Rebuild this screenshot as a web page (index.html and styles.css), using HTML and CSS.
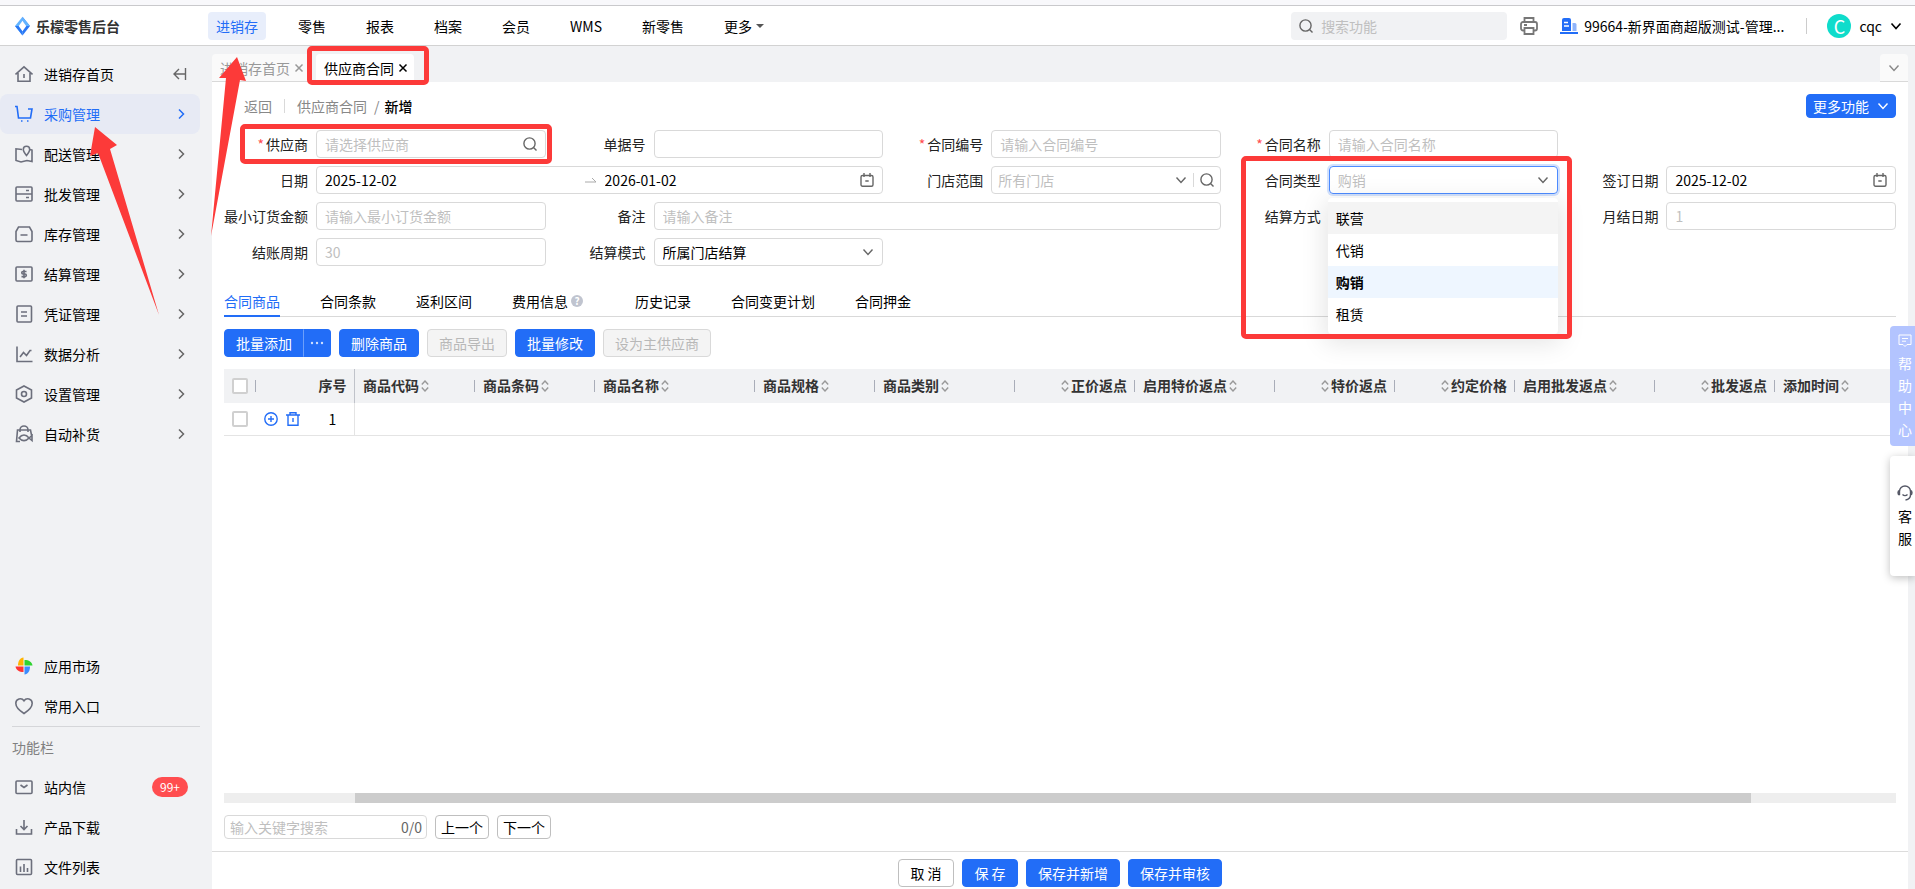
FILE: index.html
```html
<!DOCTYPE html>
<html lang="zh-CN">

<head>
    <meta charset="utf-8">
    <meta name="viewport" content="width=device-width, initial-scale=1.0">
    <title>供应商合同</title>
    <link rel="stylesheet" href="styles.css">
</head>

<body>
    <!-- shared icons -->
    <svg class="sprite" aria-hidden="true">
        <symbol id="down" viewBox="0 0 12 12"><path d="M1.5 3.5 6 8.5l4.5-5" /></symbol>
        <symbol id="right" viewBox="0 0 12 12"><path d="M4 1.5 8.5 6 4 10.5" /></symbol>
        <symbol id="search" viewBox="0 0 14 14"><circle cx="6.5" cy="6.5" r="5.6" /><path d="m10.5 10.5 3 3" /></symbol>
        <symbol id="calendar" viewBox="0 0 14 14"><rect x="1" y="2.5" width="12" height="10.8" rx="1.5" /><path d="M4 0v4M10 0v4M5.3 8h3.4" /></symbol>
        <symbol id="close" viewBox="0 0 10 10"><path d="m1.5 1.5 7 7M8.5 1.5l-7 7" /></symbol>
        <symbol id="sort" viewBox="0 0 8 12"><path d="M.8 4.500 4 1l3.200 3.500M.8 7.500 4 11l3.200-3.500" /></symbol>
    </svg>

    <header class="topbar">
        <div class="brand">
            <svg class="logo" viewBox="0 0 16 20"><path fill="#62b4ff" d="M8 0 0 10l8 10z" /><path fill="#2a78f5" d="m8 0 8 10-8 10z" /><path fill="#2a78f5" d="m0 10 8 10v-4.500L4 10z" /><path fill="#62b4ff" d="m8 0 8 10h-4L8 4.500z" /><path fill="#fff" d="m8 4.500 4 5.500-4 5.500L4 10z" /></svg>
            <span>乐檬零售后台</span>
        </div>
        <nav class="topnav">
            <a href="#" class="valgt">进销存</a>
            <a href="#">零售</a>
            <a href="#">报表</a>
            <a href="#">档案</a>
            <a href="#">会员</a>
            <a href="#">WMS</a>
            <a href="#">新零售</a>
            <a href="#">更多<i class="caret"></i></a>
        </nav>
        <div class="topright">
            <label class="topsearch">
                <svg class="icon14"><use href="#search" /></svg>
                <input type="text" placeholder="搜索功能" aria-label="搜索功能">
            </label>
            <svg class="printer" viewBox="0 0 18 18"><path d="M4.500 5V1h9v4M4.500 13.500H3a2 2 0 0 1-2-2V7a2 2 0 0 1 2-2h12a2 2 0 0 1 2 2v4.500a2 2 0 0 1-2 2h-1.500M4.500 11h9v6h-9zM4 8h3" /></svg>
            <svg class="building" viewBox="0 0 18 16"><path fill="#226df7" d="M2 2a2 2 0 0 1 2-2h5a2 2 0 0 1 2 2v11H2zM0 14h18v2H0z" /><path fill="#8fb4fb" d="M12.500 5H15a1.500 1.500 0 0 1 1.500 1.500V13h-4z" /><path stroke="#fff" stroke-width="1.500" d="M4 4.500h4M4 8h5" /></svg>
            <span class="shop">99664-新界面商超版测试-管理...</span>
            <span class="divider"></span>
            <span class="avatar">C</span>
            <span class="user">cqc</span>
            <svg class="icon12 dark"><use href="#down" /></svg>
        </div>
    </header>

    <div class="page">
        <aside class="sidebar">
            <a href="#" class="item">
                <svg class="menuicon" viewBox="0 0 18 18"><path d="M.500 9.500 9 1.800l8.500 7.700M3 8v8.300h12V8M9 9v4" /></svg>
                <span>进销存首页</span>
                <svg class="collapse" viewBox="0 0 14 12"><path d="M6 1 1 6l5 5M1 6h11.500M12.500 0v12" /></svg>
            </a>
            <a href="#" class="item valgt">
                <svg class="menuicon" viewBox="0 0 18 18"><path d="M0 1.500h2L3.500 13h12l1.500-9h-4M6 16h1.500M12 16h1.500" /></svg>
                <span>采购管理</span>
                <svg class="icon12"><use href="#right" /></svg>
            </a>
            <a href="#" class="item">
                <svg class="menuicon" viewBox="0 0 18 18"><path d="M7 4.500 1 3.800V15.500l5 1.500 6-1.500 5 1V5l-2-.600M11.500 10.500C9.500 8 8.300 6.500 8.300 4.500a3.200 3.200 0 0 1 6.400 0c0 2-1.200 3.500-3.200 6z" /></svg>
                <span>配送管理</span>
                <svg class="icon12"><use href="#right" /></svg>
            </a>
            <a href="#" class="item">
                <svg class="menuicon" viewBox="0 0 18 18"><rect x="1" y="2" width="16" height="14" rx="1" /><path d="M1 9h16M11 5.500h3M11 12.500h3" /></svg>
                <span>批发管理</span>
                <svg class="icon12"><use href="#right" /></svg>
            </a>
            <a href="#" class="item">
                <svg class="menuicon" viewBox="0 0 18 18"><path d="M3.500 2h11L17 6.500V15a1.500 1.500 0 0 1-1.500 1.500h-13A1.500 1.500 0 0 1 1 15V6.500zM5.500 10h7" /></svg>
                <span>库存管理</span>
                <svg class="icon12"><use href="#right" /></svg>
            </a>
            <a href="#" class="item">
                <svg class="menuicon" viewBox="0 0 18 18"><rect x="1" y="2" width="16" height="14" rx="1" /><path d="M11.500 6.500H8a1.200 1.200 0 0 0 0 2.500h2a1.300 1.300 0 0 1 0 2.600H6.500M9 4.800v8.400" /></svg>
                <span>结算管理</span>
                <svg class="icon12"><use href="#right" /></svg>
            </a>
            <a href="#" class="item">
                <svg class="menuicon" viewBox="0 0 18 18"><rect x="2" y="1" width="14.500" height="16" rx="1" /><path d="M6 7h6M6 11h6" /></svg>
                <span>凭证管理</span>
                <svg class="icon12"><use href="#right" /></svg>
            </a>
            <a href="#" class="item">
                <svg class="menuicon" viewBox="0 0 18 18"><path d="M2 1.500v15h15.500M5 12l3.500-4.500 3 3 3.500-5h1.500" /></svg>
                <span>数据分析</span>
                <svg class="icon12"><use href="#right" /></svg>
            </a>
            <a href="#" class="item">
                <svg class="menuicon" viewBox="0 0 18 18"><path d="m9 1 7.500 4v8L9 17l-7.500-4V5z" /><circle cx="9" cy="9" r="2.500" /></svg>
                <span>设置管理</span>
                <svg class="icon12"><use href="#right" /></svg>
            </a>
            <a href="#" class="item">
                <svg class="menuicon" viewBox="0 0 18 18"><path d="M5 7V5a4 4 0 0 1 8 0v2M5 16.500H1.500L2.500 5h13l1 5M4 13c3-4 7-4 10 0l3-2.500v5L14 13c-3 3.500-7 3.500-10 0z" /></svg>
                <span>自动补货</span>
                <svg class="icon12"><use href="#right" /></svg>
            </a>

            <div class="bottom">
                <a href="#" class="item">
                    <svg class="pinwheel" viewBox="0 0 18 18"><path fill="#ffb400" d="M8.500 8.500H3C3 4 5 1 8.500.500z" /><path fill="#2fd32f" d="M9.500 8.500V3c4.500 0 7.500 2 8 5.500z" /><path fill="#3b8cff" d="M9.500 9.500H15c0 4.500-2 7.500-5.500 8z" /><path fill="#ff3333" d="M8.500 9.500V15C4 15 1 13 .500 9.500z" /></svg>
                    <span>应用市场</span>
                </a>
                <a href="#" class="item">
                    <svg class="menuicon" viewBox="0 0 18 18"><path d="M9 16.500C5 14 .8 10.800.8 6.300A4.500 4.500 0 0 1 9 3.800a4.500 4.500 0 0 1 8.200 2.500C17.200 10.800 13 14 9 16.500z" /></svg>
                    <span>常用入口</span>
                </a>
                <p class="group">功能栏</p>
                <a href="#" class="item">
                    <svg class="menuicon" viewBox="0 0 18 18"><rect x="1" y="3" width="16" height="12.500" rx="1" /><path d="m5.500 7 3.500 2.500L12.500 7" /></svg>
                    <span>站内信</span>
                    <b class="badge">99+</b>
                </a>
                <a href="#" class="item">
                    <svg class="menuicon" viewBox="0 0 18 18"><path d="M9 2v9M5.500 8 9 11.500 12.500 8M1.500 11v5h15v-5" /></svg>
                    <span>产品下载</span>
                </a>
                <a href="#" class="item">
                    <svg class="menuicon" viewBox="0 0 18 18"><rect x="1.500" y="1.500" width="15" height="15" rx="1" /><path d="M5.500 8.500V14M9 6v8M12.500 10v4" /></svg>
                    <span>文件列表</span>
                </a>
            </div>
        </aside>

        <main class="main">
            <div class="tabbar">
                <div class="tab">进销存首页<button type="button" class="close" aria-label="关闭进销存首页"><svg class="icon10"><use href="#close" /></svg></button></div>
                <div class="tab valgt">供应商合同<button type="button" class="close" aria-label="关闭供应商合同"><svg class="icon10"><use href="#close" /></svg></button><span class="mark"></span></div>
                <button type="button" class="tabmore" aria-label="全部标签"><svg class="icon12"><use href="#down" /></svg></button>
            </div>

            <div class="content">
                <div class="crumbs">
                    <a href="#">返回</a>
                    <span class="line"></span>
                    <a href="#">供应商合同</a>
                    <span class="slash">/</span>
                    <strong>新增</strong>
                    <button type="button" class="primary more">更多功能<svg class="icon12"><use href="#down" /></svg></button>
                </div>

                <form class="form">
                    <div class="field supplier">
                        <label for="supplier" class="required">供应商</label>
                        <div class="box"><input id="supplier" type="text" placeholder="请选择供应商"><svg class="icon14"><use href="#search" /></svg></div>
                        <span class="mark"></span>
                    </div>
                    <div class="field">
                        <label for="billno">单据号</label>
                        <div class="box"><input id="billno" type="text"></div>
                    </div>
                    <div class="field">
                        <label for="contractno" class="required">合同编号</label>
                        <div class="box"><input id="contractno" type="text" placeholder="请输入合同编号"></div>
                    </div>
                    <div class="field">
                        <label for="contractname" class="required">合同名称</label>
                        <div class="box"><input id="contractname" type="text" placeholder="请输入合同名称"></div>
                    </div>

                    <div class="field wide newrow">
                        <label for="from">日期</label>
                        <div class="box">
                            <input id="from" type="text" value="2025-12-02">
                            <svg class="arrow" viewBox="0 0 12 6"><path d="M0 5h11L7 1" /></svg>
                            <input type="text" value="2026-01-02" aria-label="结束日期">
                            <svg class="icon14"><use href="#calendar" /></svg>
                        </div>
                    </div>
                    <div class="field">
                        <label for="stores">门店范围</label>
                        <div class="box tight">
                            <select id="stores" class="empty"><option>所有门店</option></select>
                            <svg class="icon12"><use href="#down" /></svg>
                            <span class="line"></span>
                            <svg class="icon14"><use href="#search" /></svg>
                        </div>
                    </div>
                    <div class="field type">
                        <label for="type">合同类型</label>
                        <div class="box focus">
                            <select id="type" class="empty"><option>购销</option></select>
                            <svg class="icon12"><use href="#down" /></svg>
                        </div>
                        <ul class="dropdown" role="listbox" aria-label="合同类型">
                            <li role="option" class="hover">联营</li>
                            <li role="option">代销</li>
                            <li role="option" class="valgt" aria-selected="true">购销</li>
                            <li role="option">租赁</li>
                        </ul>
                        <span class="mark"></span>
                    </div>
                    <div class="field">
                        <label for="signdate">签订日期</label>
                        <div class="box"><input id="signdate" type="text" value="2025-12-02"><svg class="icon14"><use href="#calendar" /></svg></div>
                    </div>

                    <div class="field">
                        <label for="minimum">最小订货金额</label>
                        <div class="box"><input id="minimum" type="text" placeholder="请输入最小订货金额"></div>
                    </div>
                    <div class="field wide">
                        <label for="remark">备注</label>
                        <div class="box"><input id="remark" type="text" placeholder="请输入备注"></div>
                    </div>
                    <div class="field">
                        <label for="method">结算方式</label>
                        <div class="box"><select id="method"><option></option></select></div>
                    </div>
                    <div class="field">
                        <label for="monthday">月结日期</label>
                        <div class="box"><input id="monthday" type="text" placeholder="1"></div>
                    </div>

                    <div class="field">
                        <label for="cycle">结账周期</label>
                        <div class="box"><input id="cycle" type="text" placeholder="30"></div>
                    </div>
                    <div class="field">
                        <label for="mode">结算模式</label>
                        <div class="box">
                            <select id="mode"><option>所属门店结算</option></select>
                            <svg class="icon12"><use href="#down" /></svg>
                        </div>
                    </div>
                </form>

                <nav class="subtabs">
                    <a href="#" class="valgt">合同商品</a>
                    <a href="#">合同条款</a>
                    <a href="#">返利区间</a>
                    <a href="#" class="withhelp">费用信息<i class="help">?</i></a>
                    <a href="#">历史记录</a>
                    <a href="#">合同变更计划</a>
                    <a href="#">合同押金</a>
                </nav>

                <div class="toolbar">
                    <div class="split">
                        <button type="button" class="primary">批量添加</button>
                        <button type="button" class="primary dots" aria-label="更多添加方式"><svg viewBox="0 0 14 4"><circle cx="2" cy="2" r="1.200" /><circle cx="7" cy="2" r="1.200" /><circle cx="12" cy="2" r="1.200" /></svg></button>
                    </div>
                    <button type="button" class="primary">删除商品</button>
                    <button type="button" disabled>商品导出</button>
                    <button type="button" class="primary">批量修改</button>
                    <button type="button" disabled>设为主供应商</button>
                </div>

                <div class="tablewrap">
                    <table>
                        <colgroup>
                            <col class="w32"><col class="w55"><col class="w44">
                            <col class="w120"><col class="w120"><col class="w160"><col class="w120">
                            <col class="w140"><col class="w120"><col class="w140"><col class="w120">
                            <col class="w120"><col class="w140"><col class="w120"><col>
                        </colgroup>
                        <thead>
                            <tr>
                                <th class="sep check"><input type="checkbox" aria-label="全选"></th>
                                <th></th>
                                <th class="number">序号</th>
                                <th class="sep">商品代码<svg class="sort"><use href="#sort" /></svg></th>
                                <th class="sep">商品条码<svg class="sort"><use href="#sort" /></svg></th>
                                <th class="sep">商品名称<svg class="sort"><use href="#sort" /></svg></th>
                                <th class="sep">商品规格<svg class="sort"><use href="#sort" /></svg></th>
                                <th class="sep">商品类别<svg class="sort"><use href="#sort" /></svg></th>
                                <th class="sep end"><svg class="sort"><use href="#sort" /></svg>正价返点</th>
                                <th class="sep">启用特价返点<svg class="sort"><use href="#sort" /></svg></th>
                                <th class="sep end"><svg class="sort"><use href="#sort" /></svg>特价返点</th>
                                <th class="sep end"><svg class="sort"><use href="#sort" /></svg>约定价格</th>
                                <th class="sep">启用批发返点<svg class="sort"><use href="#sort" /></svg></th>
                                <th class="sep end"><svg class="sort"><use href="#sort" /></svg>批发返点</th>
                                <th>添加时间<svg class="sort"><use href="#sort" /></svg></th>
                            </tr>
                        </thead>
                        <tbody>
                            <tr>
                                <td class="check"><input type="checkbox" aria-label="选择第1行"></td>
                                <td>
                                    <div class="ops">
                                        <button type="button" aria-label="添加行"><svg viewBox="0 0 14 14"><circle cx="7" cy="7" r="6.200" /><path d="M7 4v6M4 7h6" /></svg></button>
                                        <button type="button" aria-label="删除行"><svg viewBox="0 0 14 14"><path d="M0 3h14M4 3V.8h6V3M2 3v10.200h10V3M7 6v4" /></svg></button>
                                    </div>
                                </td>
                                <td class="number">1</td>
                                <td colspan="12"></td>
                            </tr>
                        </tbody>
                    </table>
                </div>
                <div class="scrollbar"><div class="thumb"></div></div>

                <div class="finder">
                    <label class="find"><input type="text" placeholder="输入关键字搜索" aria-label="输入关键字搜索"><span>0/0</span></label>
                    <button type="button">上一个</button>
                    <button type="button">下一个</button>
                </div>
            </div>

            <footer class="footer">
                <button type="button">取 消</button>
                <button type="button" class="primary">保 存</button>
                <button type="button" class="primary">保存并新增</button>
                <button type="button" class="primary">保存并审核</button>
            </footer>
        </main>
    </div>

    <div class="floating">
        <button type="button" class="helpcenter">
            <svg viewBox="0 0 14 14"><path d="M1 1h12v9.500H9L7 12.500l-2-2H1zM4 4.500h6M4 7.200h4" /></svg>
            <span>帮</span><span>助</span><span>中</span><span>心</span>
        </button>
        <button type="button" class="service">
            <svg viewBox="0 0 16 16"><path d="M2.500 10V6.500a5.500 5.500 0 0 1 11 0V10c0 3-2 4.500-5 5M2.500 5.500C.500 6 .500 9.500 2.500 10M13.500 5.500c2 .500 2 4 0 4.500M5.500 9.500c1.500 1.500 3.500 1.500 5 0" /></svg>
            <span>客</span><span>服</span>
        </button>
    </div>

    <svg class="pointers" viewBox="0 0 260 330" aria-hidden="true">
        <path d="M237 57 246 81 240 80 211 236 226 78 219 78z" />
        <path d="M95 127 117 145 110 149 159 315 98 153 90 156z" />
    </svg>
</body>

</html>
```
FILE: styles.css
```css
* {
    box-sizing: border-box;
}

body {
    margin: 0;
    height: 100vh;
    display: flex;
    flex-direction: column;
    position: relative;
    overflow: hidden;
    background-color: #f1f2f4;
    color: #000;
    font-family: "Noto Sans CJK SC", sans-serif;
    font-size: 14px;
    line-height: 20px;
}

a {
    color: inherit;
    text-decoration: none;
}

svg {
    fill: none;
    stroke: currentColor;
    flex: none;
}

input,
select,
button {
    font: inherit;
    color: inherit;
}

input,
select {
    appearance: none;
    border: 0;
    padding: 0;
    outline: 0;
    background: none;
    min-width: 0;
    flex: 1;
}

input::placeholder {
    color: #bfbfbf;
    opacity: 1;
}

button {
    height: 28px;
    padding: 0 11px;
    border: 1px solid #bfbfbf;
    border-radius: 4px;
    background-color: #fff;
    white-space: nowrap;
    cursor: pointer;
}

button.primary {
    border-color: #226df7;
    background-color: #226df7;
    color: #fff;
}

button:disabled {
    border-color: #d9d9d9;
    background-color: #f4f4f4;
    color: #b8b8b8;
}

.sprite {
    display: none;
}

.icon10 {
    width: 10px;
    height: 10px;
    stroke-width: 1.5;
}

.icon12 {
    width: 12px;
    height: 12px;
    stroke-width: 1.4;
}

.icon14 {
    width: 14px;
    height: 14px;
    stroke-width: 1.4;
}

/* top bar */
.topbar {
    height: 46px;
    flex: none;
    display: flex;
    align-items: center;
    padding: 1px 13px 0 15px;
    border-top: 5px solid #f8f8fb;
    border-bottom: 1px solid #d2d2d2;
    background-color: #fff;
    box-shadow: inset 0 1px #c9c9cc;
}

.brand {
    width: 193px;
    display: flex;
    align-items: center;
    gap: 6px;
    color: #333;
    font-weight: bold;
}

.logo {
    width: 15px;
    height: 20px;
    stroke: none;
}

.topnav {
    display: flex;
    gap: 24px;
}

.topnav a {
    padding: 4px 8px;
    border-radius: 4px;
}

.topnav .valgt {
    background-color: #e8eefb;
    color: #226df7;
}

.caret {
    display: inline-block;
    margin-left: 4px;
    border: 4px solid transparent;
    border-top-color: #555;
    border-bottom: 0;
    vertical-align: 4px;
}

.topright {
    margin-left: auto;
    display: flex;
    align-items: center;
}

.topsearch {
    width: 216px;
    height: 28px;
    padding: 0 8px;
    display: flex;
    align-items: center;
    gap: 8px;
    border-radius: 4px;
    background-color: #f1f2f4;
    color: #666;
}

.printer {
    width: 18px;
    height: 18px;
    margin: 0 22px 0 13px;
    color: #777;
    stroke-width: 1.8;
}

.building {
    width: 18px;
    height: 16px;
    margin-right: 6px;
    stroke: none;
}

.divider {
    width: 1px;
    height: 16px;
    margin: 0 20px 0 22px;
    background-color: #ccc;
}

.avatar {
    width: 24px;
    height: 24px;
    margin-right: 8px;
    border-radius: 50%;
    background-color: #0fdccb;
    color: #fff;
    font-size: 18px;
    line-height: 24px;
    text-align: center;
}

.user {
    margin-right: 8px;
}

.dark {
    stroke-width: 1.6;
}

/* sidebar */
.page {
    flex: 1;
    min-height: 0;
    display: flex;
}

.sidebar {
    width: 212px;
    flex: none;
    display: flex;
    flex-direction: column;
    padding: 8px 12px 2px 0;
}

.item {
    height: 40px;
    display: flex;
    align-items: center;
    gap: 11px;
    padding: 0 13px 0 15px;
    border-radius: 8px;
}

.item span {
    flex: 1;
}

.item .icon12 {
    color: #666;
    stroke-width: 1.5;
}

.item.valgt,
.item.valgt svg {
    background-color: #e7eaf4;
    color: #226df7;
}

.menuicon,
.pinwheel {
    width: 18px;
    height: 18px;
    color: #6c6f7c;
    stroke-width: 1.6;
}

.pinwheel {
    stroke: none;
}

.collapse {
    width: 14px;
    height: 12px;
    color: #666;
    stroke-width: 1.4;
}

.bottom {
    margin-top: auto;
}

.group {
    height: 41px;
    margin: 0 0 0 12px;
    padding-top: 11px;
    box-shadow: inset 0 1px #d5d6d9;
    color: #808080;
}

.badge {
    margin-right: -1px;
    padding: 0 8px;
    border-radius: 10px;
    background-color: #ff4d4f;
    color: #fff;
    font-size: 12px;
    font-weight: normal;
}

/* page tabs */
.main {
    flex: 1;
    min-width: 0;
    margin-right: 7px;
    display: flex;
    flex-direction: column;
}

.tabbar {
    height: 36px;
    flex: none;
    display: flex;
    align-items: flex-end;
    gap: 6px;
}

.tab {
    position: relative;
    width: 98px;
    height: 28px;
    display: flex;
    align-items: center;
    gap: 4px;
    padding-left: 8px;
    border-bottom: 1px solid #d9d9d9;
    border-radius: 4px 4px 0 0;
    background-color: #fafafa;
    color: #999;
    white-space: nowrap;
}

.tab.valgt {
    border-color: #fff;
    background-color: #fff;
    color: #000;
}

.close {
    height: 10px;
    padding: 0;
    display: flex;
    border: 0;
    background: none;
}

.tabmore {
    width: 28px;
    margin-left: auto;
    padding: 0 7px;
    border: 0;
    border-bottom: 1px solid #d9d9d9;
    border-radius: 4px 4px 0 0;
    background-color: #fafafa;
    color: #888;
}

/* content */
.content {
    flex: 1;
    min-height: 0;
    display: flex;
    flex-direction: column;
    padding: 12px;
    background-color: #fff;
}

.crumbs {
    height: 24px;
    flex: none;
    display: flex;
    align-items: center;
    padding-left: 20px;
    color: #888;
}

.line {
    width: 1px;
    height: 14px;
    background-color: #d9d9d9;
}

.crumbs .line {
    margin: 0 12px;
}

.slash {
    margin: 0 5px 0 7px;
}

.crumbs strong {
    color: #000;
    font-weight: 500;
}

.more {
    height: 24px;
    margin-left: auto;
    padding: 0 6px;
    display: flex;
    align-items: center;
    gap: 8px;
}

.form {
    display: grid;
    grid-template-columns: repeat(5, minmax(0, 1fr));
    gap: 8px 16px;
    margin: 12px 0 22px;
}

.field {
    position: relative;
    display: flex;
    align-items: center;
    gap: 8px;
}

.field label {
    width: 84px;
    flex: none;
    color: #222;
    text-align: right;
}

.required::before {
    content: "*";
    margin-right: 2px;
    color: #ff4d4f;
}

.wide {
    grid-column: span 2;
}

.newrow {
    grid-column: 1 / span 2;
}

.box {
    flex: 1;
    min-width: 0;
    height: 28px;
    display: flex;
    align-items: center;
    gap: 8px;
    padding: 0 8px;
    border: 1px solid #d9d9d9;
    border-radius: 4px;
}

.box svg {
    color: #666;
}

.box .arrow {
    width: 12px;
    height: 6px;
    margin-left: 4px;
    color: #aaa;
}

.tight {
    gap: 6px;
    padding: 0 6px;
}

.focus {
    border-color: #4d8bff;
    box-shadow: 0 0 0 2px #d3e2fd;
}

.empty {
    color: #bfbfbf;
}

.dropdown {
    position: absolute;
    z-index: 5;
    top: 32px;
    left: 91px;
    right: 0;
    margin: 0;
    padding: 4px 0;
    border-radius: 4px;
    background-color: #fff;
    box-shadow: 0 6px 24px 4px rgba(0, 0, 0, 0.1);
    list-style: none;
}

.dropdown li {
    padding: 6px 8px;
}

.dropdown .hover {
    background-color: #f4f4f4;
}

.dropdown .valgt {
    background-color: #eef6ff;
    font-weight: bold;
}

.subtabs {
    flex: none;
    display: flex;
    gap: 40px;
    box-shadow: inset 0 -1px #d9d9d9;
}

.subtabs a {
    padding: 3px 0 4px;
    border-bottom: 2px solid transparent;
}

.subtabs .valgt {
    border-color: #226df7;
    color: #226df7;
}

.subtabs .withhelp {
    padding-right: 12px;
}

.help {
    display: inline-block;
    width: 12px;
    height: 12px;
    margin-left: 3px;
    border-radius: 50%;
    background-color: #c0c4cf;
    color: #fff;
    font-size: 10px;
    font-style: normal;
    font-weight: bold;
    line-height: 12px;
    text-align: center;
    vertical-align: 2px;
}

.toolbar {
    flex: none;
    display: flex;
    gap: 8px;
    margin: 12px 0;
}

.split {
    display: flex;
}

.split button {
    border-radius: 4px 0 0 4px;
}

.split .dots {
    width: 28px;
    margin-left: -1px;
    padding: 0 6px;
    border-left-color: #6c9ffa;
    border-radius: 0 4px 4px 0;
}

.dots svg {
    display: block;
    width: 14px;
    height: 4px;
    fill: #cfe0ff;
    stroke: none;
}

/* goods table */
.tablewrap {
    flex: 1;
    min-height: 0;
    overflow: hidden;
}

table {
    width: 100%;
    table-layout: fixed;
    border-collapse: separate;
    border-spacing: 0;
}

.w32 { width: 32px; }
.w44 { width: 44px; }
.w55 { width: 55px; }
.w120 { width: 120px; }
.w140 { width: 140px; }
.w160 { width: 160px; }

th,
td {
    height: 34px;
    padding: 0 8px;
    text-align: left;
    white-space: nowrap;
}

th {
    padding-bottom: 2px;
    background-color: #f1f2f4;
    color: #333;
}

th.check {
    padding-bottom: 0;
}

td {
    height: 33px;
    border-bottom: 1px solid #e4e4e4;
}

.sep {
    background-image: linear-gradient(#a9adb8, #a9adb8);
    background-position: right center;
    background-repeat: no-repeat;
    background-size: 1px 12px;
}

.end {
    text-align: right;
}

.number {
    padding-left: 0;
    padding-right: 0;
    border-right: 1px solid #e4e4e4;
    text-align: center;
}

th.number {
    border-right-color: #c0c3ca;
}

.sort {
    width: 8px;
    height: 12px;
    margin: 0 2px;
    color: #999;
    stroke-width: 1.4;
    vertical-align: -1px;
}

input[type="checkbox"] {
    display: block;
    width: 16px;
    height: 16px;
    margin: 0;
    border: 2px solid #d0d0d0;
    border-radius: 2px;
    background-color: #fff;
}

.ops {
    display: flex;
    gap: 8px;
}

.ops button {
    height: 14px;
    padding: 0;
    border: 0;
    background: none;
    color: #226df7;
}

.ops svg {
    display: block;
    width: 14px;
    height: 14px;
    stroke-width: 1.4;
}

.scrollbar {
    height: 10px;
    flex: none;
    padding: 0 145px 0 131px;
    background-color: #eee;
}

.thumb {
    height: 10px;
    background-color: #ccc;
}

.finder {
    flex: none;
    display: flex;
    gap: 8px;
    margin-top: 12px;
}

.find {
    width: 203px;
    height: 24px;
    padding: 0 4px 0 5px;
    display: flex;
    align-items: center;
    border: 1px solid #d9d9d9;
    border-radius: 4px;
    color: #666;
}

.finder button {
    height: 24px;
    padding: 0 5px;
}

.footer {
    height: 38px;
    flex: none;
    display: flex;
    justify-content: center;
    gap: 8px;
    padding-top: 7px;
    border-top: 1px solid #dcdcdc;
    background-color: #fff;
}

.footer button {
    min-width: 56px;
}

/* tabs fixed to the right edge */
.floating {
    position: absolute;
    z-index: 10;
    top: 326px;
    right: 0;
    display: flex;
    flex-direction: column;
    gap: 10px;
}

.floating button {
    width: 25px;
    height: 120px;
    padding: 2px 2px 0 7px;
    display: flex;
    flex-direction: column;
    align-items: center;
    justify-content: center;
    border: 0;
    border-radius: 4px 0 0 4px;
    line-height: 22px;
}

.floating svg {
    width: 14px;
    height: 14px;
    margin-bottom: 4px;
}

.helpcenter {
    background-color: #b3c4ff;
    color: #fff;
}

.service {
    box-shadow: 0 2px 8px rgba(0, 0, 0, 0.25);
}

.floating .service svg {
    width: 16px;
    height: 16px;
    color: #555866;
    stroke-width: 1.4;
}

/* red annotations */
.mark {
    position: absolute;
    z-index: 6;
    border: 5px solid #fc3a39;
    border-radius: 5px;
    pointer-events: none;
}

.tab .mark {
    inset: -8px -15px -4px -9px;
}

.supplier .mark {
    inset: -6px -6px -6px 16px;
}

.type .mark {
    inset: -10px -14px -145px 4px;
}

.pointers {
    position: absolute;
    z-index: 20;
    top: 0;
    left: 0;
    width: 260px;
    height: 330px;
    fill: #fc3a39;
    stroke: none;
    pointer-events: none;
}
```
